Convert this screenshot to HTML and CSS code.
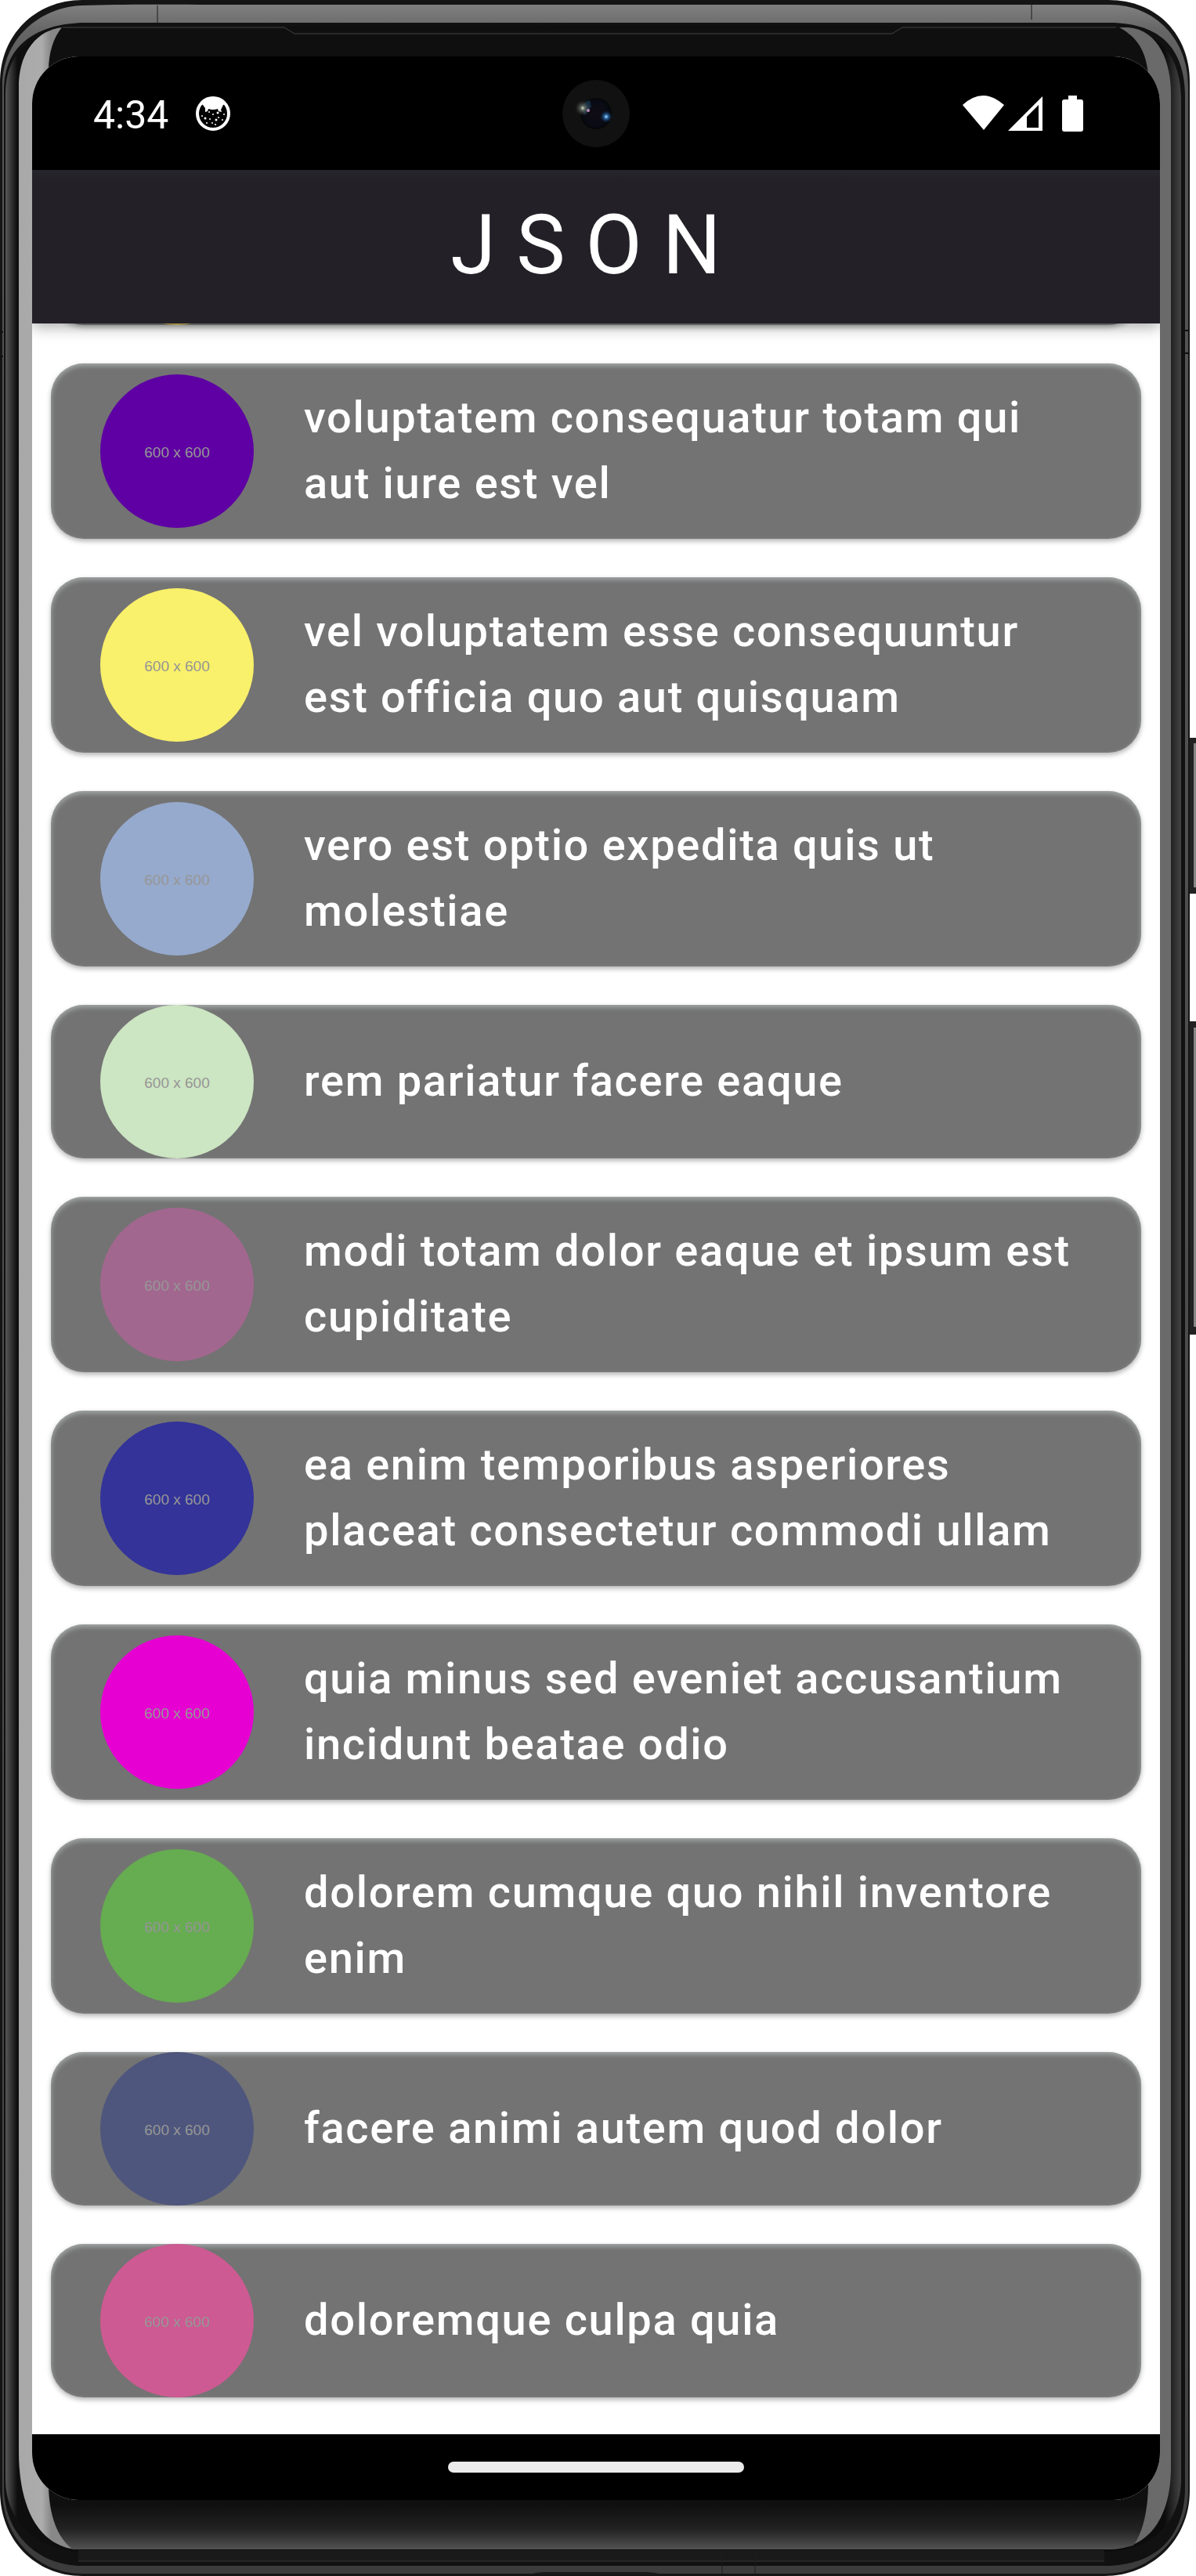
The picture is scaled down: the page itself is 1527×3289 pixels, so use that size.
FILE: index.html
```
<!DOCTYPE html>
<html lang="en">
<head>
<meta charset="utf-8">
<meta name="viewport" content="width=device-width, initial-scale=1">
<title>JSON</title>
<link rel="stylesheet" href="styles.css">
</head>
<body>
<div class="phone">
  <svg class="frame" viewBox="0 0 1527 3289" preserveAspectRatio="none" aria-hidden="true">
    <defs>
      <linearGradient id="metal" x1="0" y1="0" x2="0" y2="1">
        <stop offset="0" stop-color="#808080"/><stop offset=".01" stop-color="#666"/><stop offset=".03" stop-color="#555"/><stop offset=".93" stop-color="#444"/><stop offset="1" stop-color="#3c3c3c"/>
      </linearGradient>
      <linearGradient id="side" x1="0" y1="0" x2="1" y2="0">
        <stop offset="0" stop-color="#585858"/><stop offset=".01" stop-color="#0e0e0e"/><stop offset=".986" stop-color="#0c0c0c"/><stop offset="1" stop-color="#444"/>
      </linearGradient>
      <linearGradient id="glass" x1="0" y1="0" x2="1" y2="0">
        <stop offset="0" stop-color="#a8a8a8"/><stop offset=".02" stop-color="#acacac"/><stop offset=".028" stop-color="#888"/><stop offset=".5" stop-color="#666"/><stop offset="1" stop-color="#6a6a6a"/>
      </linearGradient>
      <linearGradient id="chin" x1="0" y1="0" x2="0" y2="1">
        <stop offset="0" stop-color="#0f0f0f"/><stop offset=".982" stop-color="#0f0f0f"/><stop offset=".992" stop-color="#222"/><stop offset="1" stop-color="#525252"/>
      </linearGradient>
    </defs>
    <rect x="1516" y="942" width="14" height="199" rx="3" fill="#222"/>
    <rect x="1524" y="949" width="3" height="184" fill="#888"/>
    <rect x="1516" y="1304" width="14" height="400" rx="3" fill="#222"/>
    <rect x="1524" y="1312" width="3" height="382" fill="#888"/>
    <path d="M105 0H1415C1478 0 1519 45 1519 105V3180C1519 3243 1470 3289 1410 3289H105C45 3289 0 3243 0 3180V105C0 45 45 0 105 0Z" fill="#151515"/>
    <path d="M105 7C160 5 220 6 300 6H1415C1474 5 1517 50 1517 110V3180C1517 3240 1468 3286 1410 3286H105C48 3286 3 3240 3 3180V110C3 50 50 9 105 7Z" fill="url(#metal)"/>
    <path d="M105 29H1415C1475 29 1513 55 1513 125V3175C1513 3235 1480 3276 1410 3276H105C48 3276 5 3235 5 3175V115C5 55 50 31 105 29Z" fill="#111"/>
    <path d="M105 34H1415C1470 34 1508 60 1508 130V3165C1508 3220 1470 3258 1410 3258H105C48 3258 7 3220 7 3165V120C7 60 50 34 105 34Z" fill="url(#side)"/>
    <path d="M80 35H1440C1480 38 1495 80 1495 120V3150C1495 3210 1470 3255 1415 3255H95C42 3247 24 3190 24 3130V105C26 65 48 38 80 35Z" fill="url(#glass)"/>
    <path d="M79 35H1429C1453 48 1463 66 1466 95V3175C1465 3210 1458 3235 1447 3250Q1430 3255 1400 3255H93C72 3240 63 3210 62 3175V90C62 68 68 48 79 35Z" fill="url(#chin)"/>
    <path d="M80 35H363L376 43H1139L1152 35H1425" fill="none" stroke="#444" stroke-width="1"/>
    <path d="M100 3256H1410V3271H100Z" fill="#1a1a1a"/>
    <path d="M100 3270H1410" stroke="#333" stroke-width="1"/>
    <path d="M201 7V29M1317 4V25M922 3257V3287M964 3257V3287" fill="none" stroke="#1c1c1c" stroke-width="1"/>
    <path d="M676 3287Q685 3284 695 3284H825Q835 3284 846 3287Z" fill="#181818"/>
    <path d="M0 424H4M0 455H4M1513 422H1519M1513 451H1519" stroke="#111" stroke-width="2"/>
  </svg>

  <div class="screen">
    <div class="status">
      <time class="clock">4:34</time>
      <svg class="badge" viewBox="0 0 44 44" aria-hidden="true">
        <circle cx="22" cy="22" r="20" fill="#000" stroke="#fff" stroke-width="4"/>
        <path d="M5 9C12 -1 32 -1 39 9L35 11L32 17L33 20L29 19L28 16Q22 18 16 16L15 19L12 20L12 15L9 11Z" fill="#fff"/>
        <g fill="#fff"><circle cx="12" cy="28" r="1.500"/><circle cx="28" cy="21" r="1.500"/><circle cx="22" cy="23" r="1"/><circle cx="17" cy="20" r="1"/><circle cx="36" cy="23" r="1"/><circle cx="8" cy="25" r="1"/><circle cx="18" cy="29" r="1"/><circle cx="26" cy="30" r="1.500"/><circle cx="34" cy="30" r="1"/><circle cx="29" cy="27" r="1"/><circle cx="14" cy="34" r="1"/><circle cx="21" cy="34" r="1"/><circle cx="25" cy="36" r="1"/></g>
      </svg>
      <svg class="signals" viewBox="0 0 156 46" aria-hidden="true">
        <g fill="#fff"><path d="M0 12Q26 -12 53 12L27 44Z"/><path fill-rule="evenodd" d="M58 45L102 1V45ZM82 27V41H97V12Z"/><path d="M135 0h11v5h5q3 0 3 3v35q0 3-3 3h-21q-3 0-3-3V8q0-3 3-3h5Z"/></g>
      </svg>
      <svg class="camera" viewBox="0 0 86 86" aria-hidden="true">
        <defs>
          <radialGradient id="lens"><stop offset="0" stop-color="#100c14"/><stop offset=".8" stop-color="#090b14"/><stop offset="1" stop-color="#050607"/></radialGradient>
          <radialGradient id="glow"><stop offset="0" stop-color="#d8dcc8"/><stop offset=".3" stop-color="#6b7468" stop-opacity=".8"/><stop offset="1" stop-color="#333" stop-opacity="0"/></radialGradient>
          <radialGradient id="blue"><stop offset="0" stop-color="#c0e4ff"/><stop offset=".3" stop-color="#2c6ba8"/><stop offset="1" stop-color="#0a2040" stop-opacity="0"/></radialGradient>
        </defs>
        <circle cx="43" cy="43" r="43" fill="#111"/>
        <circle cx="43" cy="43" r="20" fill="url(#lens)"/>
        <path d="M24 38Q27 27 35 26L37 34L29 45Z" fill="#17344d" opacity=".8"/>
        <circle cx="26" cy="36" r="10" fill="url(#glow)"/>
        <circle cx="33" cy="39" r="2" fill="#b58ab8"/>
        <circle cx="56" cy="47" r="8" fill="url(#blue)"/>
      </svg>
    </div>
    <header class="appbar"><h1>JSON</h1></header>
    <main class="viewport">
      <div class="card previous" aria-hidden="true"><span class="avatar gold"></span></div>
      <ul class="list">
        <li class="card"><span class="avatar purple">600 x 600</span><p>voluptatem consequatur totam qui aut iure est vel</p></li>
        <li class="card"><span class="avatar yellow">600 x 600</span><p>vel voluptatem esse consequuntur est officia quo aut quisquam</p></li>
        <li class="card"><span class="avatar sky">600 x 600</span><p>vero est optio expedita quis ut molestiae</p></li>
        <li class="card"><span class="avatar mint">600 x 600</span><p>rem pariatur facere eaque</p></li>
        <li class="card"><span class="avatar mauve">600 x 600</span><p>modi totam dolor eaque et ipsum est cupiditate</p></li>
        <li class="card"><span class="avatar indigo">600 x 600</span><p>ea enim temporibus asperiores placeat consectetur commodi ullam</p></li>
        <li class="card"><span class="avatar magenta">600 x 600</span><p>quia minus sed eveniet accusantium incidunt beatae odio</p></li>
        <li class="card"><span class="avatar green">600 x 600</span><p>dolorem cumque quo nihil inventore enim</p></li>
        <li class="card"><span class="avatar slate">600 x 600</span><p>facere animi autem quod dolor</p></li>
        <li class="card"><span class="avatar pink">600 x 600</span><p>doloremque culpa quia</p></li>
      </ul>
    </main>
    <div class="navbar"><span class="handle"></span></div>
  </div>
</div>
</body>
</html>
```
FILE: styles.css
```
* { box-sizing: border-box; }
body { margin: 0; background: #fff; font-family: Roboto, "Liberation Sans", sans-serif; }
h1, p, ul { margin: 0; padding: 0; }

.phone { position: relative; padding: 72px 46px 97px 41px; }
.frame { position: absolute; inset: 0; width: 100%; height: 100%; }
.screen { position: relative; background: #fff; border-radius: 60px; overflow: hidden; }

.status { position: relative; display: flex; align-items: center; height: 145px; padding: 0 96px 0 78px; background: #000; color: #fff; }
.clock { padding-top: 4px; font-size: 50px; line-height: 60px; }
.badge { width: 44px; height: 44px; margin-left: 35px; }
.signals { width: 156px; height: 46px; margin-left: auto; }
.camera { position: absolute; left: 50%; top: 50%; width: 86px; height: 86px; transform: translate(-50%, -50%); }

.appbar { position: relative; z-index: 1; display: flex; align-items: center; justify-content: center; height: 196px; padding-bottom: 2px; background: linear-gradient(#28262d, #232127 14px); color: #fff; box-shadow: 0 4px 18px rgba(0, 0, 0, .35); }
.appbar h1 { font-size: 105px; font-weight: 400; line-height: 124px; letter-spacing: 26px; }

.viewport { padding: 0 24px 47px; overflow: hidden; }
.list { display: flex; flex-direction: column; gap: 49px; padding-top: 49px; list-style: none; }
.card { display: flex; align-items: center; gap: 64px; min-height: 196px; padding: 0 63px; border-radius: 42px; background: #737373; box-shadow: 0 3px 6px rgba(0, 0, 0, .3), inset 0 3px 6px rgba(190, 195, 195, .7); }
.card p { flex: 1; padding: 27px 0 29px; color: #fff; font-size: 56px; font-weight: 500; line-height: 84px; letter-spacing: 0.03em; }
.previous { margin-top: -194px; }
.avatar { display: flex; flex: none; align-items: center; justify-content: center; width: 196px; height: 196px; padding-top: 4px; border-radius: 50%; color: #969696; font: 19px/24px "Liberation Sans", Arial, sans-serif; }
.gold { background: #d6bc62; }
.purple { background: #5e00a3; }
.yellow { background: #f9f06b; }
.sky { background: #96aacd; }
.mint { background: #cce5c2; }
.mauve { background: #a2678f; }
.indigo { background: #333399; }
.magenta { background: #e600d2; }
.green { background: #66ac51; }
.slate { background: #4e567d; }
.pink { background: #cd5a92; }

.navbar { display: flex; align-items: center; justify-content: center; height: 84px; background: #000; }
.handle { width: 378px; height: 14px; border-radius: 7px; background: #ebebeb; }
```
